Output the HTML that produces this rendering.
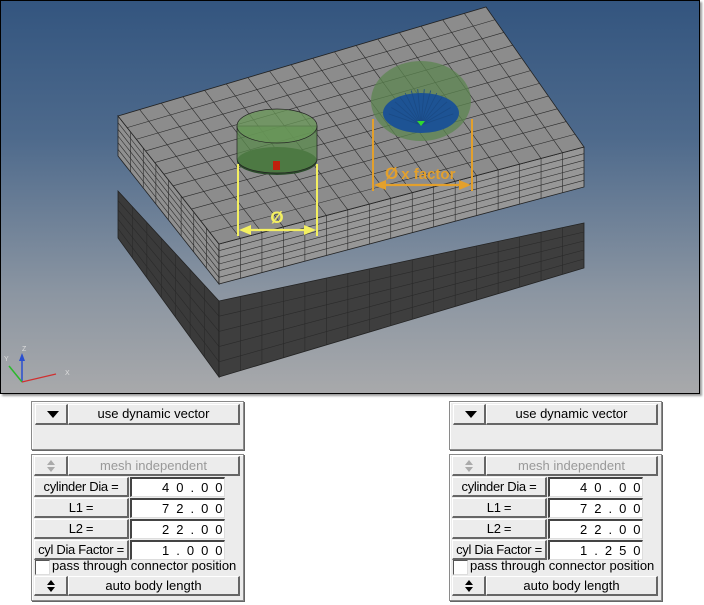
<!DOCTYPE html>
<html><head><meta charset="utf-8"><style>
body{margin:0;width:704px;height:605px;background:#fff;position:relative;overflow:hidden;font-family:"Liberation Sans",sans-serif;}
#vp{position:absolute;left:0;top:0;width:698px;height:392px;border:1px solid #000;background:linear-gradient(#33557f 0%,#4e6a8c 35%,#8c96a2 75%,#a8a9ab 100%);box-shadow:2px 2px 2px #999;}
.box{position:absolute;background:#ececec;border:1px solid #8a8a8a;box-shadow:1px 1px 0 #666,inset 1px 1px 0 #fff;}
.btn{position:absolute;background:#ececec;border-top:1px solid #fff;border-left:1px solid #fff;border-right:2px solid #666;border-bottom:2px solid #666;box-sizing:border-box;font-size:13px;text-align:center;line-height:17px;color:#000;}
.fld{position:absolute;background:#fff;border-top:2px solid #444;border-left:2px solid #444;border-right:1px solid #ddd;border-bottom:1px solid #ddd;box-sizing:border-box;font-size:13px;line-height:17px;text-align:left;padding-left:30px;letter-spacing:7px;}
.dis{color:#999;}
.cb{position:absolute;width:13px;height:13px;background:#fff;border-top:1px solid #555;border-left:1px solid #555;border-right:1px solid #ddd;border-bottom:1px solid #ddd;}
.t{position:absolute;font-size:13px;white-space:nowrap;}
.tri{position:absolute;left:11px;top:6px;width:0;height:0;border-left:6px solid transparent;border-right:6px solid transparent;border-top:7px solid #000;}
</style></head><body>
<div id="vp"><svg id="s" width="698" height="392" viewBox="0 0 698 392"></svg></div>
<div id="panels"></div>
<script>
var s=document.getElementById('s'),h='';
function P(a,c,st){return '<polygon points="'+a.map(function(p){return p.join(',')}).join(' ')+'" fill="'+c+'" stroke="'+(st||'#222')+'" stroke-width="0.8"/>';}
function L(p,q,c,w){return '<line x1="'+p[0]+'" y1="'+p[1]+'" x2="'+q[0]+'" y2="'+q[1]+'" stroke="'+(c||'#2a2a2a')+'" stroke-width="'+(w||0.6)+'"/>';}
function lerp(a,b,t){return [a[0]+(b[0]-a[0])*t,a[1]+(b[1]-a[1])*t];}
function grid(a,b,c,d,nu,nv,col){
 var o=P([a,b,c,d],col);
 for(var i=1;i<nu;i++){var t=i/nu;o+=L(lerp(a,b,t),lerp(d,c,t));}
 for(var j=1;j<nv;j++){var t=j/nv;o+=L(lerp(a,d,t),lerp(b,c,t));}
 return o;}
h+=grid([117,190],[218,300],[218,376],[117,237],7,5,'#3a3a3a');
h+=grid([218,300],[583,222],[583,267],[218,376],17,5,'#3e3e3e');
h+=grid([117,115],[218,243],[218,283],[117,155],8,6,'#909090');
h+=grid([218,243],[583,146],[583,186],[218,283],17,6,'#979797');
h+=grid([117,115],[485,6],[583,146],[218,243],17,11,'#8c8c8c');
// left cylinder
h+='<ellipse cx="276" cy="160" rx="40" ry="14" fill="#2a4a2a"/>';
h+='<path d="M236,125 L236,158 A40,14 0 0 0 316,158 L316,125 Z" fill="#5a8a4c" fill-opacity="0.75" stroke="#222" stroke-width="0.7"/>';
h+='<ellipse cx="276" cy="125" rx="40" ry="17" fill="#6a9858" fill-opacity="0.75" stroke="#222" stroke-width="0.7"/>';
h+='<rect x="272" y="160" width="7" height="9" fill="#c0200c"/>';
// right cylinder
h+='<ellipse cx="420" cy="100" rx="50" ry="40" fill="#5c8650" fill-opacity="0.75"/>';
h+='<ellipse cx="420" cy="112" rx="38" ry="20" fill="#1d5394"/>';
for(var k=0;k<14;k++){var ang=Math.PI*(0.1+0.8*k/13);h+=L([420,124],[420-Math.cos(ang)*34,124-Math.sin(ang)*36],'#1a4a85',0.8);}
h+='<polygon points="416,120 424,120 420,125" fill="#2fd82f"/>';
var y='#f4f060';
h+=L([237,163],[237,235],y,2)+L([316,163],[316,235],y,2)+L([244,229],[309,229],y,2.2);
h+='<polygon points="238,229 250,224 250,234" fill="'+y+'"/><polygon points="315,229 303,224 303,234" fill="'+y+'"/>';
h+='<text x="276" y="222" fill="'+y+'" font-size="17" font-weight="bold" text-anchor="middle" font-family="Liberation Sans">Ø</text>';
var o='#e3a02c';
h+=L([372,118],[372,190],o,2)+L([471,118],[471,190],o,2)+L([380,184],[463,184],o,2.2);
h+='<polygon points="373,184 385,179 385,189" fill="'+o+'"/><polygon points="470,184 458,179 458,189" fill="'+o+'"/>';
h+='<text x="384" y="178" fill="'+o+'" font-size="17" font-weight="bold" font-family="Liberation Sans">Ø<tspan font-size="15" dx="3">x factor</tspan></text>';
h+=L([21,381],[21,357],'#2a4fd0',1.5)+'<polygon points="18,360 24,360 21,352" fill="#2a4fd0"/>';
h+=L([21,381],[8,365],'#2bb82b',1.5)+L([21,381],[55,373],'#d03030',1.2);
h+='<text x="21" y="350" font-size="7" fill="#ddd">Z</text><text x="3" y="360" font-size="7" fill="#ddd">Y</text><text x="64" y="374" font-size="7" fill="#ddd">X</text>';
s.innerHTML=h;
function ud(c){return '<svg width="10" height="12" style="margin-top:3px"><polygon points="5,0 9,5 1,5" fill="'+c+'"/><polygon points="5,12 9,7 1,7" fill="'+c+'"/></svg>';}
function panel(x,vals){
 var g='';
 g+='<div class="box" style="left:'+x+'px;top:401px;width:211px;height:47px"></div>';
 g+='<div class="btn" style="left:'+(x+4)+'px;top:404px;width:33px;height:21px"><div class="tri"></div></div>';
 g+='<div class="btn" style="left:'+(x+37)+'px;top:404px;width:172px;height:21px">use dynamic vector</div>';
 g+='<div class="box" style="left:'+x+'px;top:454px;width:211px;height:145px"></div>';
 g+='<div class="btn dis" style="left:'+(x+3)+'px;top:456px;width:34px;height:20px">'+ud('#aaa')+'</div>';
 g+='<div class="btn dis" style="left:'+(x+37)+'px;top:456px;width:172px;height:20px">mesh independent</div>';
 var labs=['cylinder Dia =','L1 =','L2 =','cyl Dia Factor ='];
 var v=['40.00','72.00','22.00',vals];
 for(var i=0;i<4;i++){var ty=477+i*21;
  g+='<div class="btn" style="left:'+(x+3)+'px;top:'+ty+'px;width:95px;height:20px;letter-spacing:-0.3px">'+labs[i]+'</div>';
  g+='<div class="fld" style="left:'+(x+99)+'px;top:'+ty+'px;width:95px;height:20px">'+v[i]+'</div>';}
 g+='<div class="cb" style="left:'+(x+4)+'px;top:560px"></div><div class="t" style="left:'+(x+21)+'px;top:558px">pass through connector position</div>';
 g+='<div class="btn" style="left:'+(x+3)+'px;top:576px;width:34px;height:20px">'+ud('#000')+'</div>';
 g+='<div class="btn" style="left:'+(x+37)+'px;top:576px;width:172px;height:20px">auto body length</div>';
 return g;}
document.getElementById('panels').innerHTML=panel(31,'1.000')+panel(449,'1.250');
</script>
</body></html>
